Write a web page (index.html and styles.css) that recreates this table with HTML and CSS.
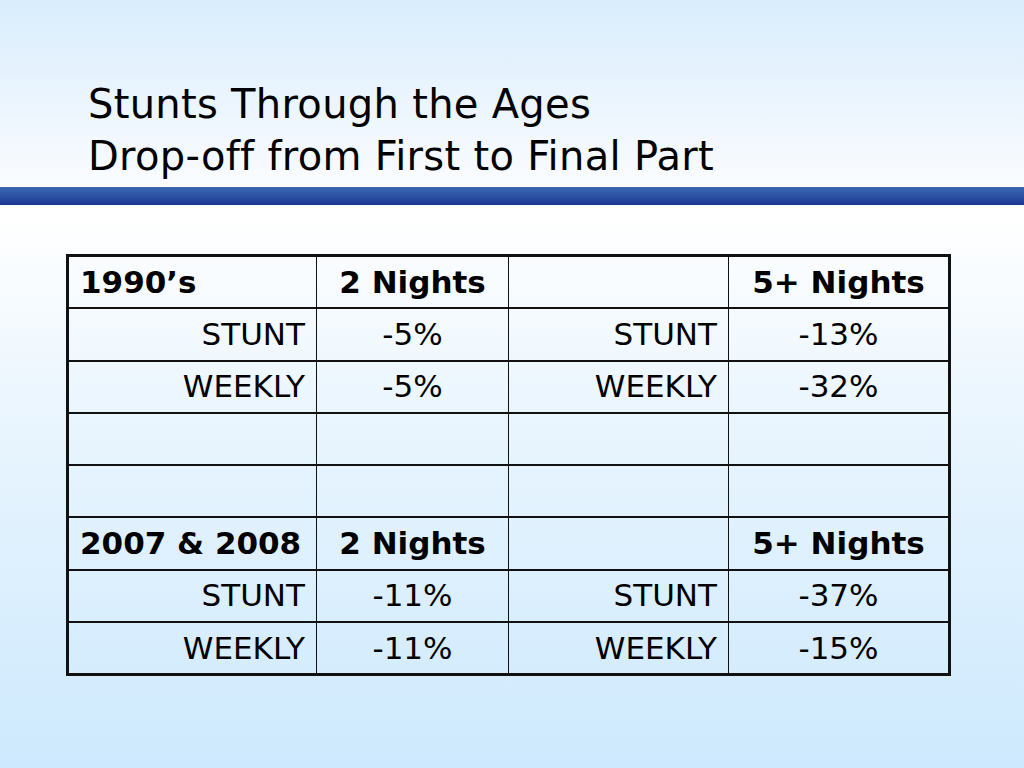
FILE: index.html
```html
<!DOCTYPE html>
<html>
<head>
<meta charset="utf-8">
<title>Stunts Through the Ages</title>
<link rel="stylesheet" href="styles.css">
</head>
<body>
<div class="slide">
  <header class="title">
    <h1>Stunts Through the Ages<br>Drop-off from First to Final Part</h1>
  </header>
  <div class="band"></div>
  <table class="data">
    <colgroup>
      <col class="c1"><col class="c2"><col class="c3"><col class="c4">
    </colgroup>
    <tr class="head">
      <td class="left">1990’s</td><td class="center">2 Nights</td><td></td><td class="center">5+ Nights</td>
    </tr>
    <tr>
      <td class="right">STUNT</td><td class="center">-5%</td><td class="right">STUNT</td><td class="center">-13%</td>
    </tr>
    <tr>
      <td class="right">WEEKLY</td><td class="center">-5%</td><td class="right">WEEKLY</td><td class="center">-32%</td>
    </tr>
    <tr><td></td><td></td><td></td><td></td></tr>
    <tr><td></td><td></td><td></td><td></td></tr>
    <tr class="head">
      <td class="left">2007 &amp; 2008</td><td class="center">2 Nights</td><td></td><td class="center">5+ Nights</td>
    </tr>
    <tr>
      <td class="right">STUNT</td><td class="center">-11%</td><td class="right">STUNT</td><td class="center">-37%</td>
    </tr>
    <tr>
      <td class="right">WEEKLY</td><td class="center">-11%</td><td class="right">WEEKLY</td><td class="center">-15%</td>
    </tr>
  </table>
</div>
</body>
</html>
```
FILE: styles.css
```css
html, body {
  margin: 0;
  padding: 0;
}
.slide {
  width: 1024px;
  height: 768px;
  overflow: hidden;
  background: linear-gradient(to bottom, #d9edfd 0%, #f4f9fe 20%, #ffffff 28%, #e9f5fe 55%, #cde9fd 100%);
  font-family: "DejaVu Sans", "Liberation Sans", sans-serif;
  color: #000;
}
.title {
  padding: 78px 0 0 88px;
  height: 187px;
  box-sizing: border-box;
}
.title h1 {
  margin: 0;
  font-weight: normal;
  font-size: 40px;
  line-height: 52px;
  letter-spacing: 0.3px;
}
.band {
  height: 18px;
  background: linear-gradient(to bottom, #3a66b2 0%, #2c52a3 50%, #1a3590 100%);
}
.data {
  margin: 49px 0 0 66px;
  border-collapse: collapse;
  border: 3px solid #111;
  table-layout: fixed;
  width: 882px;
  font-size: 31px;
}
.c1 { width: 249px; }
.c2 { width: 192px; }
.c3 { width: 220px; }
.c4 { width: 221px; }
.data td {
  border-top: 2px solid #111;
  border-bottom: 2px solid #111;
  border-left: 1px solid #111;
  border-right: 1px solid #111;
  height: 50.3px;
  padding: 0 11px;
  white-space: nowrap;
  line-height: 1;
}
.data .head td {
  font-weight: bold;
}
.left { text-align: left; }
.center { text-align: center; }
.right { text-align: right; }
```
